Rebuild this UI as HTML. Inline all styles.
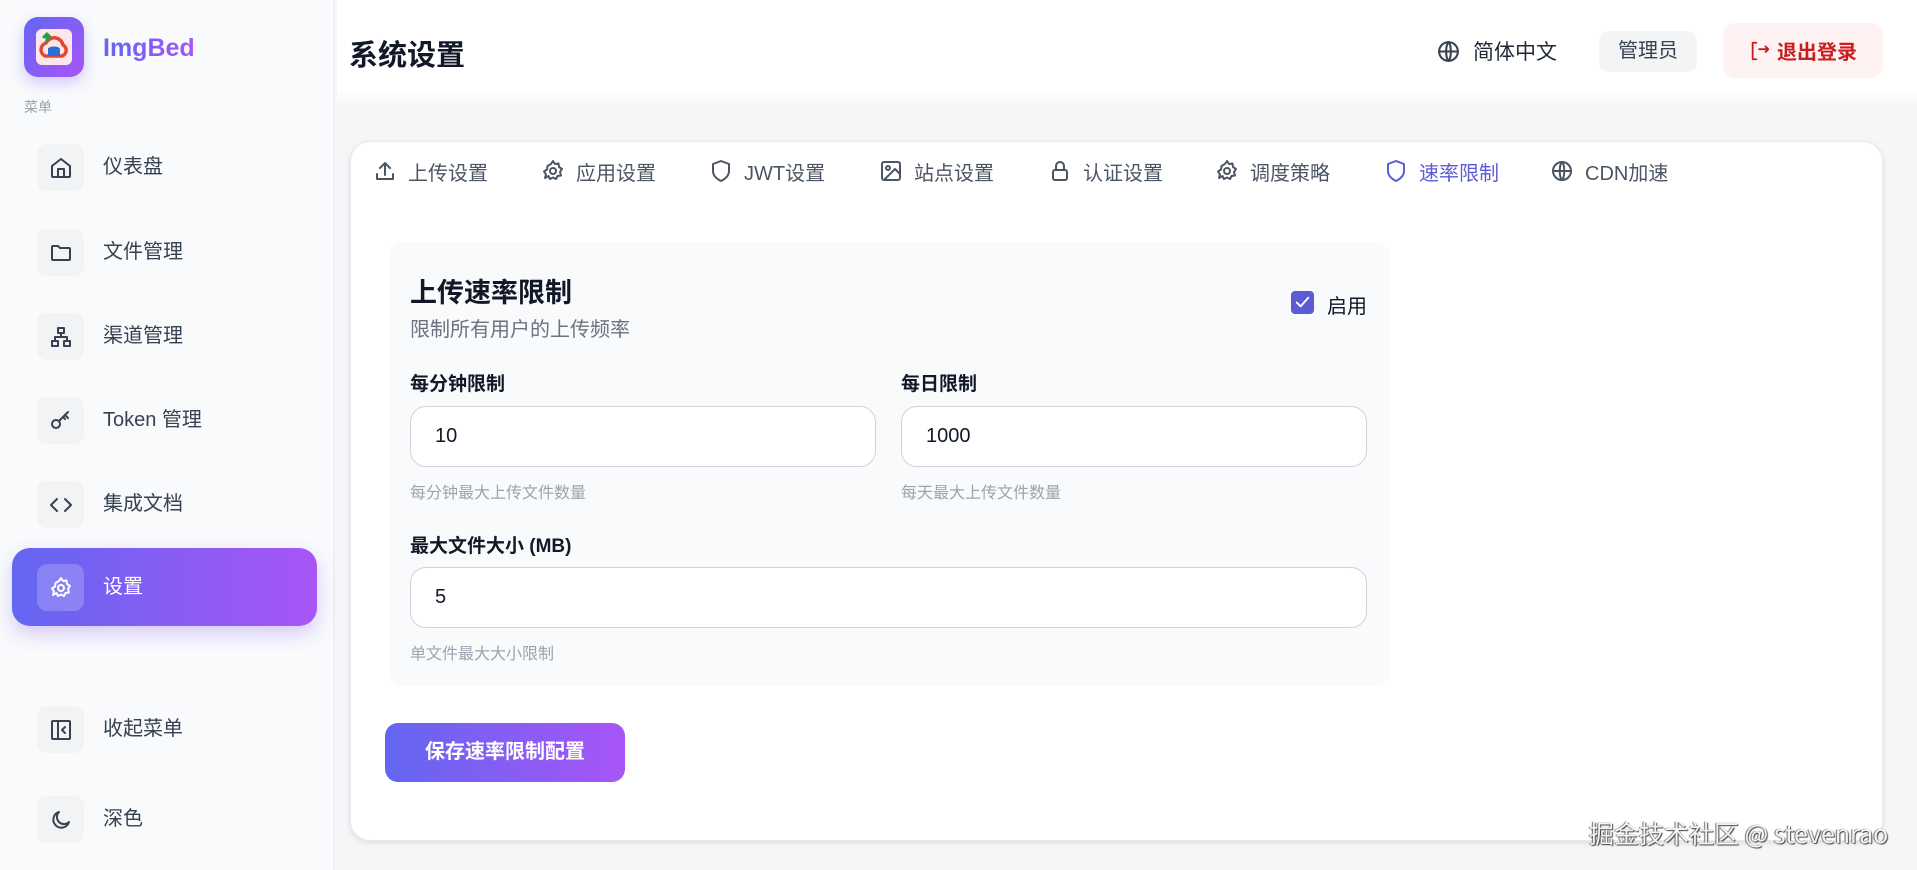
<!DOCTYPE html>
<html><head><meta charset="utf-8"><style>
*{box-sizing:border-box;margin:0;padding:0}
body{width:1917px;height:870px;overflow:hidden;background:#f5f6f8;font-family:"Liberation Sans","Noto Sans CJK SC",sans-serif;position:relative;color:#1f2937}
.abs{position:absolute}
.side{left:0;top:0;width:335px;height:870px;background:#f8fafc;border-right:2px solid #eef0f3}
.logo{left:24px;top:17px;width:60px;height:60px;border-radius:14px;background:linear-gradient(135deg,#6366f1,#a855f7);box-shadow:0 6px 14px rgba(124,92,246,.3)}
.logo .in{position:absolute;left:12px;top:12px;width:36px;height:36px;border-radius:6px;background:#fde7ea}
.brand{left:103px;top:34px;font-size:25px;font-weight:bold;background:linear-gradient(90deg,#6366f1,#a855f7);-webkit-background-clip:text;color:transparent}
.menu-l{left:24px;top:97px;font-size:14px;color:#9ca3af}
.item{left:12px;width:305px;height:78px;border-radius:18px}
.item .ib{position:absolute;left:25px;top:16px;width:47px;height:47px;border-radius:10px;background:#f1f3f5;display:flex;align-items:center;justify-content:center}
.item .t{position:absolute;left:91px;top:0;line-height:78px;font-size:20px;color:#374151}
.item.act{background:linear-gradient(90deg,#6366f1,#a855f7);box-shadow:0 8px 18px rgba(139,92,246,.3)}
.item.act .ib{background:rgba(255,255,255,.2)}
.item.act .t{color:#fff}
svg{fill:none;stroke-width:2;stroke-linecap:round;stroke-linejoin:round}
.hdr{left:337px;top:0;width:1580px;height:104px;background:linear-gradient(#fff 85%,#f7f8fa)}
.h1{left:349px;top:32px;font-size:29px;font-weight:bold;color:#111827}
.card{left:350px;top:141px;width:1533px;height:700px;background:#fff;border-radius:20px;box-shadow:0 2px 6px rgba(0,0,0,.1);border:1px solid #e8eaee}
.tab{top:156px;font-size:20px;color:#4b5563;display:flex;align-items:center;gap:11px;height:30px}
.tab svg{stroke:#4b5563}
.panel{left:389px;top:242px;width:1001px;height:444px;background:#f9fafb;border-radius:14px}
.lbl{font-size:19px;font-weight:bold;color:#111827}
.inp{height:61px;border:1px solid #cfd3d9;border-radius:16px;background:#fff;font-size:20px;line-height:59px;padding-left:24px;color:#111827}
.hint{font-size:16px;color:#9ca3af}
</style></head><body>
<div class="abs side"></div>
<div class="abs logo"><div class="in"><svg width="36" height="36" viewBox="0 0 36 36"><path d="M9 27a7 7 0 0 1 1-13 9 9 0 0 1 17 2 6 6 0 0 1-1 11z" stroke="#e0482f" stroke-width="3.5"/><ellipse cx="18" cy="20" rx="6" ry="2.5" fill="#2b6fd6" stroke="none"/><rect x="12" y="20" width="12" height="7" fill="#2b6fd6" stroke="none"/><path d="M11 12V5M8 8l3-3 3 3" stroke="#22a043" stroke-width="3"/></svg></div></div>
<div class="abs brand">ImgBed</div>
<div class="abs menu-l">菜单</div>

<div class="abs item" style="top:128px"><div class="ib"><svg width="24" height="24" viewBox="0 0 24 24" stroke="#374151"><path d="M3 10l9-7 9 7v10a1 1 0 0 1-1 1H4a1 1 0 0 1-1-1z"/><path d="M9 21v-8h6v8"/></svg></div><div class="t">仪表盘</div></div>
<div class="abs item" style="top:213px"><div class="ib"><svg width="24" height="24" viewBox="0 0 24 24" stroke="#374151"><path d="M3 6a1 1 0 0 1 1-1h5l2 2h9a1 1 0 0 1 1 1v10a1 1 0 0 1-1 1H4a1 1 0 0 1-1-1z"/></svg></div><div class="t">文件管理</div></div>
<div class="abs item" style="top:297px"><div class="ib"><svg width="24" height="24" viewBox="0 0 24 24" stroke="#374151"><rect x="9" y="3" width="6" height="5"/><rect x="3" y="16" width="6" height="5"/><rect x="15" y="16" width="6" height="5"/><path d="M12 8v4M6 16v-4h12v4"/></svg></div><div class="t">渠道管理</div></div>
<div class="abs item" style="top:381px"><div class="ib"><svg width="24" height="24" viewBox="0 0 24 24" stroke="#374151"><circle cx="7" cy="15" r="4"/><path d="M10 12l9-9M16 6l3 3M14 8l2 2"/></svg></div><div class="t">Token 管理</div></div>
<div class="abs item" style="top:465px"><div class="ib"><svg width="24" height="24" viewBox="0 0 24 24" stroke="#374151"><path d="M8 6l-6 6 6 6M16 6l6 6-6 6"/></svg></div><div class="t">集成文档</div></div>
<div class="abs item act" style="top:548px"><div class="ib"><svg width="24" height="24" viewBox="0 0 24 24" stroke="#fff"><circle cx="12" cy="12" r="3"/><path d="M12 2l2 3 3.5-.5.5 3.5 3 2-2 3 1 3.5-3.5.5-1.5 3-3-1.5-3 1.5-1.5-3L4 19l1-3.5-2-3 3-2 .5-3.5L10 5z"/></svg></div><div class="t">设置</div></div>
<div class="abs item" style="top:690px"><div class="ib"><svg width="24" height="24" viewBox="0 0 24 24" stroke="#374151"><rect x="3" y="3" width="18" height="18" rx="1"/><path d="M9 3v18M16 9l-3 3 3 3"/></svg></div><div class="t">收起菜单</div></div>
<div class="abs item" style="top:780px"><div class="ib"><svg width="24" height="24" viewBox="0 0 24 24" stroke="#374151"><path d="M20 14A8 8 0 1 1 10 4a6 6 0 0 0 10 10z"/></svg></div><div class="t">深色</div></div>

<div class="abs hdr"></div>
<div class="abs h1">系统设置</div>
<div class="abs" style="left:1436px;top:30px;height:42px;display:flex;align-items:center;gap:12px;font-size:21px;color:#1f2937"><svg width="25" height="25" viewBox="0 0 24 24" stroke="#374151"><circle cx="12" cy="12" r="9"/><path d="M3 12h18M12 3c3 3 3 15 0 18M12 3c-3 3-3 15 0 18"/></svg>简体中文</div>
<div class="abs" style="left:1599px;top:31px;width:98px;height:41px;border-radius:10px;background:#f3f4f6;font-size:20px;line-height:41px;text-align:center;color:#374151">管理员</div>
<div class="abs" style="left:1723px;top:23px;width:160px;height:55px;border-radius:12px;background:#fef2f2;color:#c81e1e;font-size:20px;font-weight:bold;display:flex;align-items:center;justify-content:center;gap:6px"><svg width="22" height="22" viewBox="0 0 24 24" stroke="#c81e1e"><path d="M8 3H4v18h4M11 10h10M18 7l3 3-3 3"/></svg>退出登录</div>

<div class="abs card"></div>
<div class="abs tab" style="left:373px"><svg width="24" height="24" viewBox="0 0 24 24"><path d="M4 15v5h16v-5M12 4v12M7 9l5-5 5 5"/></svg>上传设置</div>
<div class="abs tab" style="left:541px"><svg width="24" height="24" viewBox="0 0 24 24"><circle cx="12" cy="12" r="3"/><path d="M12 2l2 3 3.5-.5.5 3.5 3 2-2 3 1 3.5-3.5.5-1.5 3-3-1.5-3 1.5-1.5-3L4 19l1-3.5-2-3 3-2 .5-3.5L10 5z"/></svg>应用设置</div>
<div class="abs tab" style="left:709px"><svg width="24" height="24" viewBox="0 0 24 24"><path d="M12 2l8 3v7c0 5-4 8-8 10-4-2-8-5-8-10V5z"/></svg>JWT设置</div>
<div class="abs tab" style="left:879px"><svg width="24" height="24" viewBox="0 0 24 24"><rect x="3" y="3" width="18" height="18" rx="2"/><circle cx="9" cy="9" r="2"/><path d="M21 15l-5-5L5 21"/></svg>站点设置</div>
<div class="abs tab" style="left:1048px"><svg width="24" height="24" viewBox="0 0 24 24"><rect x="5" y="11" width="14" height="10" rx="2"/><path d="M8 11V7a4 4 0 0 1 8 0v4"/></svg>认证设置</div>
<div class="abs tab" style="left:1215px"><svg width="24" height="24" viewBox="0 0 24 24"><circle cx="12" cy="12" r="3"/><path d="M12 2l2 3 3.5-.5.5 3.5 3 2-2 3 1 3.5-3.5.5-1.5 3-3-1.5-3 1.5-1.5-3L4 19l1-3.5-2-3 3-2 .5-3.5L10 5z"/></svg>调度策略</div>
<div class="abs tab" style="left:1384px;color:#5b5bd6"><svg width="24" height="24" viewBox="0 0 24 24" style="stroke:#5b5bd6"><path d="M12 2l8 3v7c0 5-4 8-8 10-4-2-8-5-8-10V5z"/></svg>速率限制</div>
<div class="abs tab" style="left:1550px"><svg width="24" height="24" viewBox="0 0 24 24"><circle cx="12" cy="12" r="9"/><path d="M3 12h18M12 3c3 3 3 15 0 18M12 3c-3 3-3 15 0 18"/></svg>CDN加速</div>

<div class="abs panel"></div>
<div class="abs" style="left:410px;top:271px;font-size:27px;font-weight:bold;color:#111827">上传速率限制</div>
<div class="abs" style="left:410px;top:313px;font-size:20px;color:#6b7280">限制所有用户的上传频率</div>
<div class="abs" style="left:1291px;top:291px;width:23px;height:23px;border-radius:4px;background:#5b5bd6"><svg width="23" height="23" viewBox="0 0 24 24" stroke="#fff" stroke-width="3"><path d="M6 12l4 4 8-9"/></svg></div>
<div class="abs" style="left:1327px;top:290px;font-size:20px;color:#111827">启用</div>
<div class="abs lbl" style="left:410px;top:369px">每分钟限制</div>
<div class="abs lbl" style="left:901px;top:369px">每日限制</div>
<div class="abs inp" style="left:410px;top:406px;width:466px">10</div>
<div class="abs inp" style="left:901px;top:406px;width:466px">1000</div>
<div class="abs hint" style="left:410px;top:479px">每分钟最大上传文件数量</div>
<div class="abs hint" style="left:901px;top:479px">每天最大上传文件数量</div>
<div class="abs lbl" style="left:410px;top:531px">最大文件大小 (MB)</div>
<div class="abs inp" style="left:410px;top:567px;width:957px">5</div>
<div class="abs hint" style="left:410px;top:640px">单文件最大大小限制</div>
<div class="abs" style="left:385px;top:723px;width:240px;height:59px;border-radius:13px;background:linear-gradient(90deg,#6366f1,#a855f7);color:#fff;font-size:20px;font-weight:bold;line-height:59px;text-align:center">保存速率限制配置</div>
<div class="abs" style="left:1589px;top:818px;font-family:'Noto Sans CJK SC',sans-serif;font-size:25px;line-height:30px;color:#f4f4f4;text-shadow:1px 1px 1px #444,-1px 0 1px #666">掘金技术社区 @ stevenrao</div>
</body></html>
